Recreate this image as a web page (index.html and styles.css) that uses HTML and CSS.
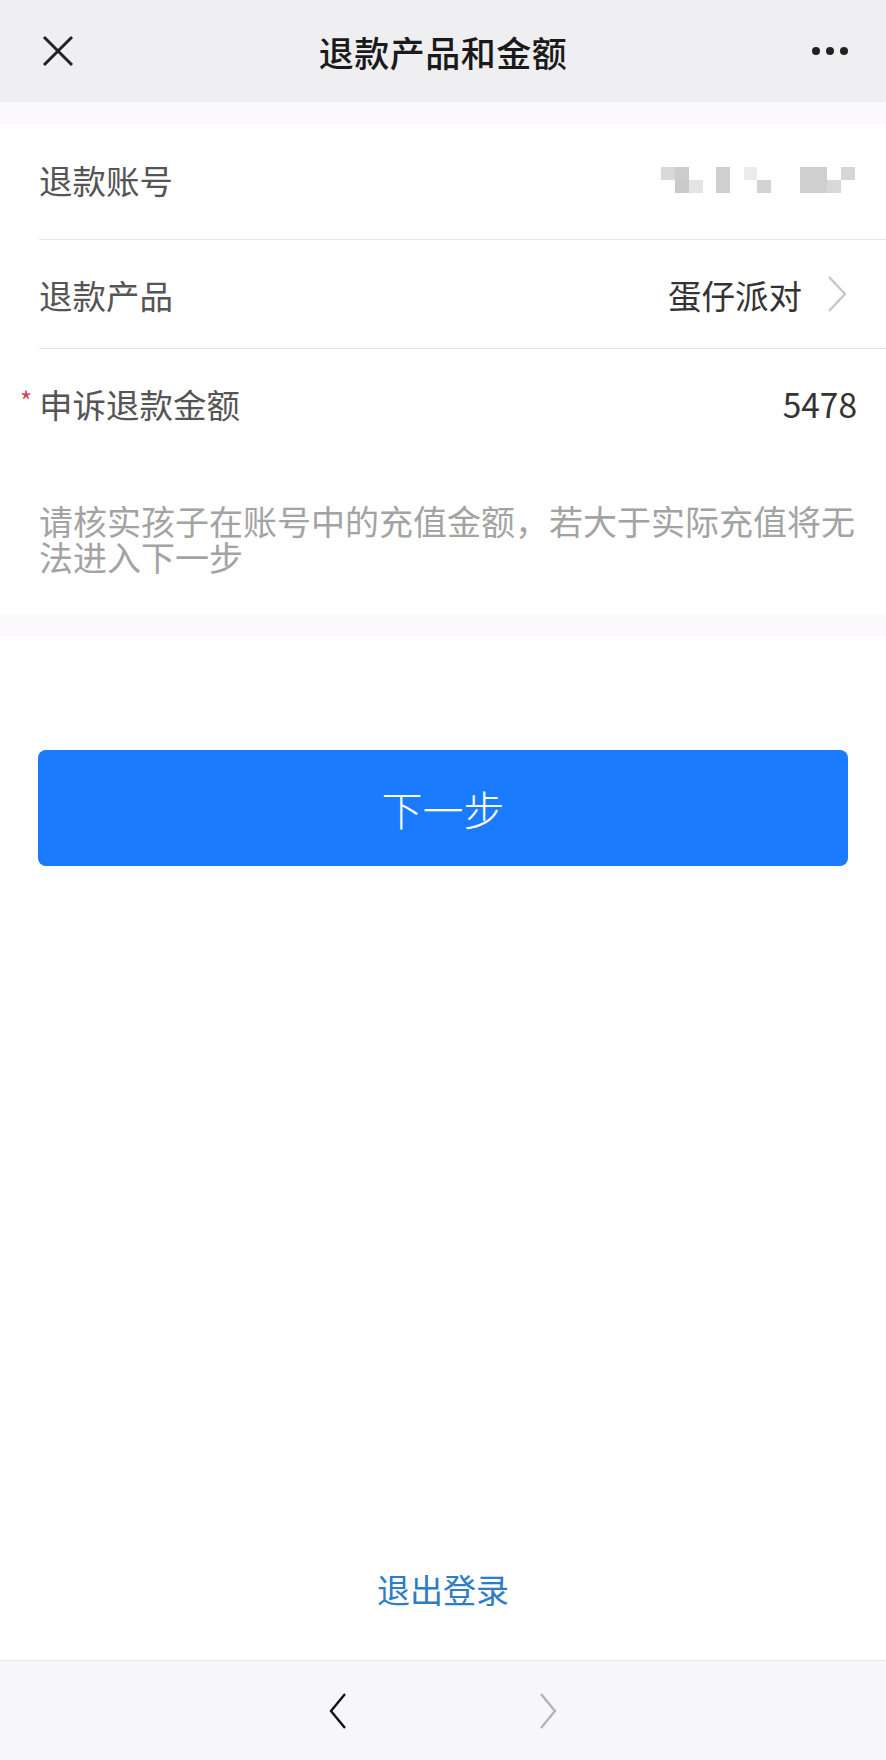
FILE: index.html
```html
<!DOCTYPE html>
<html lang="zh-CN">
<head>
    <meta charset="UTF-8">
    <meta name="viewport" content="width=device-width, initial-scale=1.0">
    <title>退款产品和金额</title>
    <link rel="stylesheet" href="styles.css">
</head>
<body>
    <header class="nav">
        <svg class="nav-close" width="32" height="32" viewBox="0 0 32 32">
            <path d="M2 2 L30 30 M30 2 L2 30" stroke="#222" stroke-width="3" fill="none"/>
        </svg>
        <h1 class="nav-title">退款产品和金额</h1>
        <div class="nav-more"><span></span><span></span><span></span></div>
    </header>

    <div class="band"></div>

    <section class="card">
        <div class="row row-first">
            <span class="label">退款账号</span>
            <svg class="mosaic" width="194" height="26" viewBox="0 0 194 26">
                <rect x="0" y="0" width="14" height="13" fill="#d8d8d8"/>
                <rect x="14" y="0" width="14" height="13" fill="#cdcdcd"/>
                <rect x="14" y="13" width="14" height="13" fill="#cacaca"/>
                <rect x="28" y="13" width="14" height="13" fill="#e4e4e4"/>
                <rect x="55" y="0" width="14" height="26" fill="#cfcfcf"/>
                <rect x="83" y="0" width="13" height="13" fill="#ececec"/>
                <rect x="96" y="13" width="14" height="13" fill="#d3d3d3"/>
                <rect x="139" y="0" width="27" height="26" fill="#cfcfcf"/>
                <rect x="166" y="13" width="14" height="13" fill="#d8d8d8"/>
                <rect x="180" y="0" width="14" height="13" fill="#d6d6d6"/>
            </svg>
        </div>
        <div class="row">
            <span class="label">退款产品</span>
            <span class="value">蛋仔派对
                <svg class="chevron" width="22" height="38" viewBox="0 0 22 38">
                    <path d="M3 2 L19 19 L3 36" stroke="#c4c4c8" stroke-width="2.2" fill="none"/>
                </svg>
            </span>
        </div>
        <div class="row row-last">
            <span class="label"><i class="required">*</i>申诉退款金额</span>
            <span class="value">5478</span>
        </div>
        <p class="hint">请核实孩子在账号中的充值金额，若大于实际充值将无法进入下一步</p>
    </section>

    <div class="band"></div>

    <main class="content">
        <button class="btn-next" type="button">下一步</button>
        <a class="logout" href="#">退出登录</a>
    </main>

    <footer class="toolbar">
        <svg width="20" height="38" viewBox="0 0 20 38">
            <path d="M17 2 L3 19 L17 36" stroke="#111" stroke-width="2.4" fill="none"/>
        </svg>
        <svg width="20" height="38" viewBox="0 0 20 38">
            <path d="M3 2 L17 19 L3 36" stroke="#b4b4b8" stroke-width="2.4" fill="none"/>
        </svg>
    </footer>
</body>
</html>
```

FILE: styles.css
```css
body {
    margin: 0;
    min-height: 1760px;
    display: flex;
    flex-direction: column;
    background-color: #fff;
    font-family: "Noto Sans CJK SC", "Noto Sans", sans-serif;
}
.nav {
    height: 102px;
    display: flex;
    align-items: center;
    justify-content: space-between;
    padding: 0 38px 0 42px;
    background-color: #efeef1;
    box-sizing: border-box;
}
.nav-close {
    display: block;
}
.nav-title {
    margin: 0;
    font-size: 35px;
    font-weight: 500;
    color: #1a1a1a;
    letter-spacing: 0.5px;
}
.nav-more {
    display: flex;
    gap: 6px;
    width: 36px;
}
.nav-more span {
    width: 8px;
    height: 8px;
    border-radius: 50%;
    background-color: #222;
}
.band {
    height: 22px;
    background-color: #fbf9fb;
}
.card {
    padding: 7px 0 39px 39px;
    background-color: #fff;
}
.row {
    height: 108px;
    display: flex;
    align-items: center;
    justify-content: space-between;
    padding-right: 29px;
    border-bottom: 1px solid #e6e6e6;
    font-size: 33.5px;
}
.row-first {
    height: 97px;
    padding-bottom: 11px;
}
.row-last {
    border-bottom: none;
}
.label {
    position: relative;
    color: #555;
}
.required {
    position: absolute;
    left: -19px;
    top: 2px;
    font-style: normal;
    font-size: 26px;
    color: #d0435c;
}
.value {
    display: flex;
    align-items: center;
    gap: 24px;
    color: #333;
}
.value .chevron {
    margin-right: 9px;
}
.mosaic {
    display: block;
    margin-right: 2px;
}
.hint {
    margin: 46px 0 0;
    padding-right: 25px;
    font-size: 34px;
    line-height: 36px;
    color: #a3a3a3;
}
.content {
    flex: 1;
    display: flex;
    flex-direction: column;
    align-items: center;
    padding: 114px 38px 0;
}
.btn-next {
    width: 100%;
    height: 116px;
    border: none;
    border-radius: 8px;
    background-color: #1b7bff;
    color: #fff;
    font-family: inherit;
    font-size: 41px;
    font-weight: 300;
    cursor: pointer;
}
.logout {
    margin-top: auto;
    margin-bottom: 47px;
    font-size: 33px;
    color: #2e7dc6;
    text-decoration: none;
}
.toolbar {
    height: 100px;
    display: flex;
    align-items: center;
    justify-content: center;
    gap: 190px;
    border-top: 1px solid #e8e8e8;
    background-color: #f7f7f9;
    box-sizing: border-box;
}
```
